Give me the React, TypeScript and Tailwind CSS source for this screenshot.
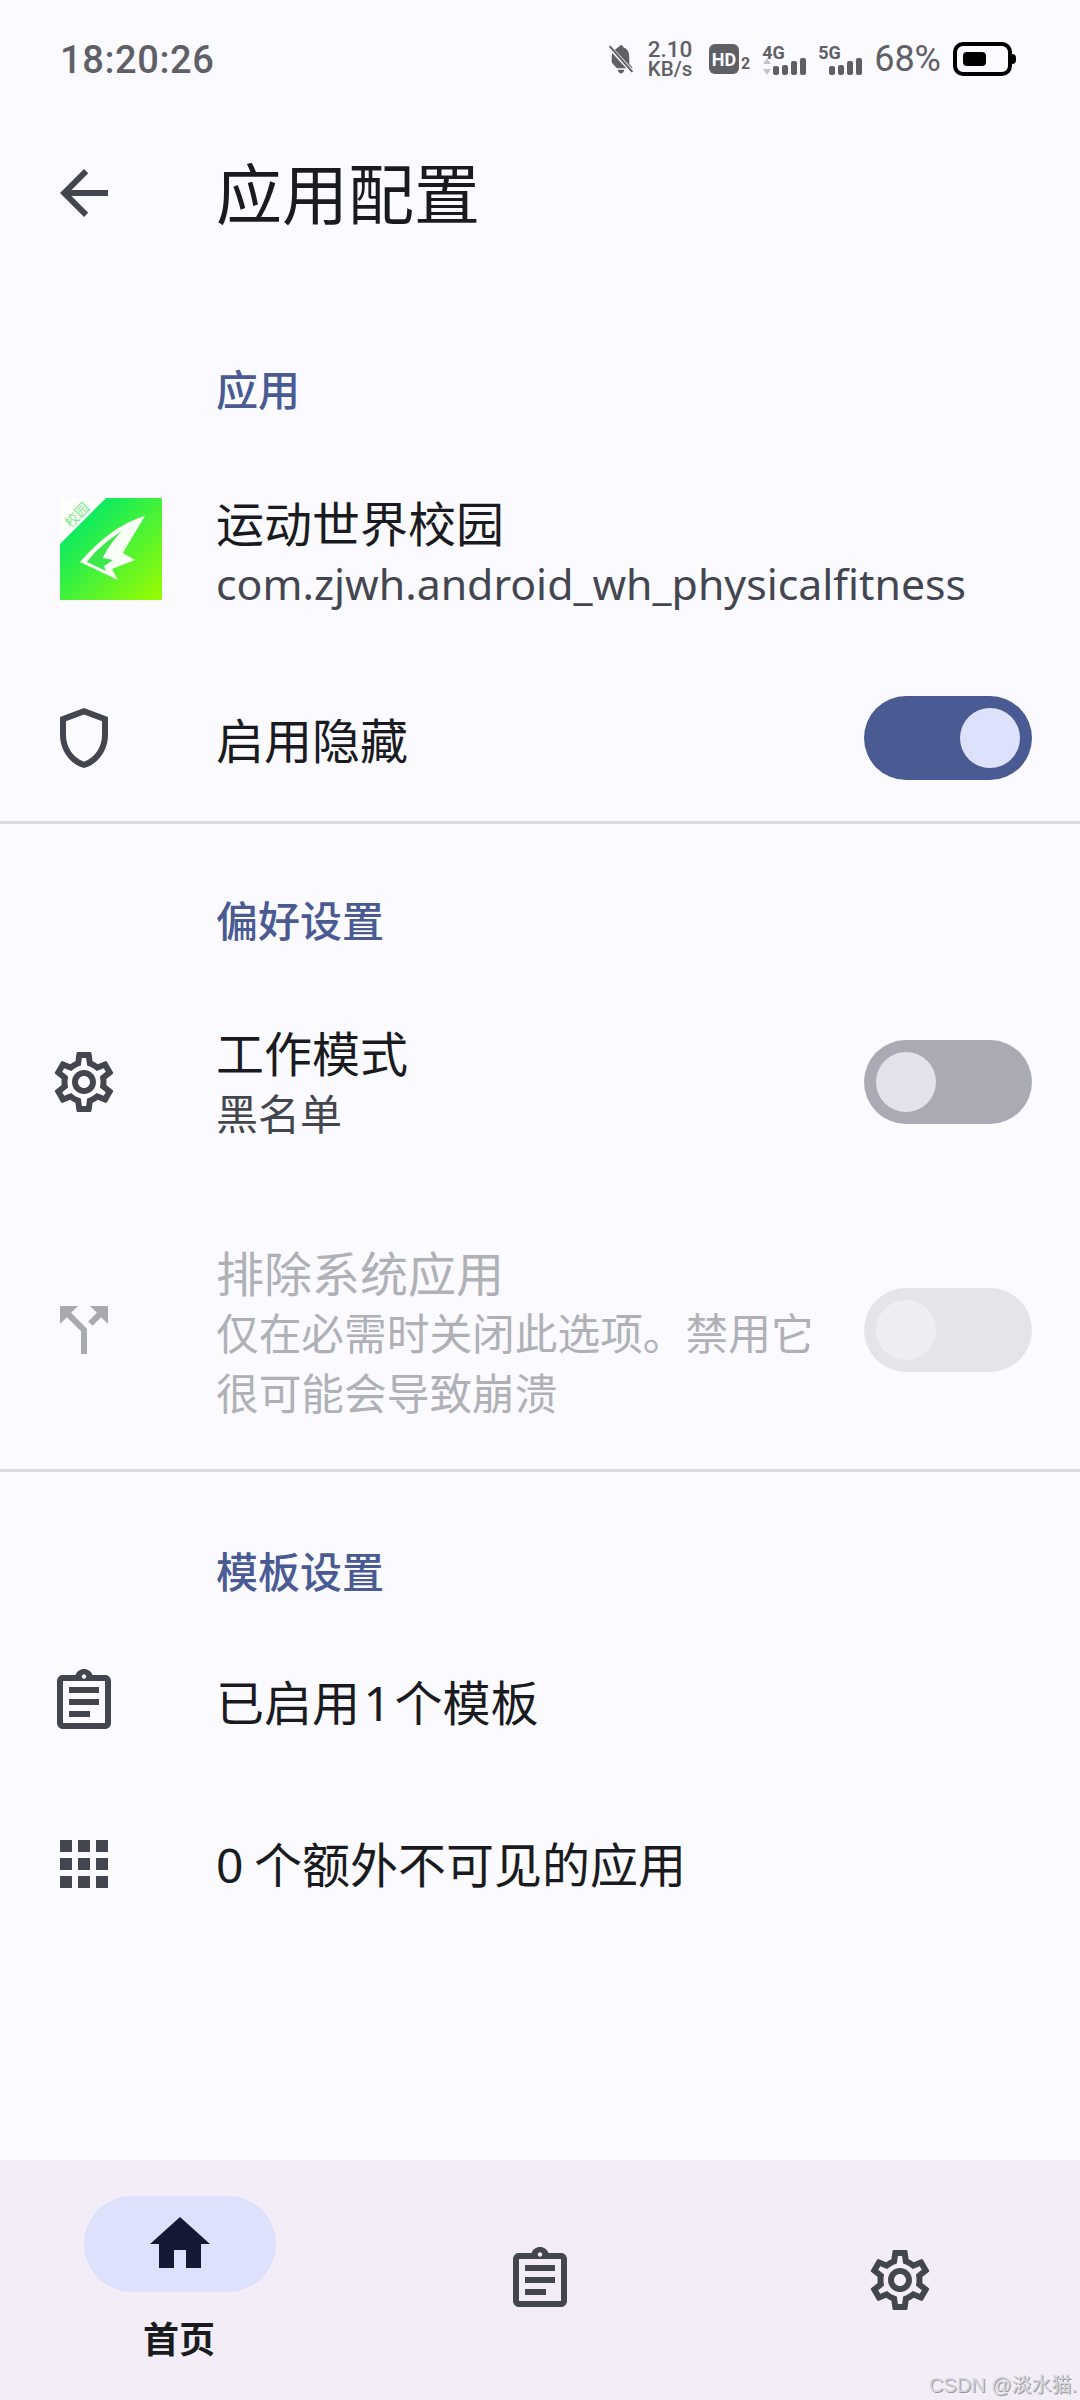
const CJK = "font-['Noto_Sans','Noto_Sans_CJK_SC',sans-serif]";

const ICONS = {
  back: 'M20 11H7.83l5.59-5.59L12 4l-8 8 8 8 1.41-1.41L7.83 13H20v-2z',
  shield:
    'M12 2 4 5v6.09c0 5.05 3.41 9.76 8 10.91 4.59-1.15 8-5.86 8-10.91V5l-8-3zm6 9.09c0 4-2.55 7.7-6 8.83-3.45-1.13-6-4.82-6-8.83v-4.7l6-2.25 6 2.25v4.7z',
  gear: 'M19.43 12.98c.04-.32.07-.64.07-.98 0-.34-.03-.66-.07-.98l2.11-1.65c.19-.15.24-.42.12-.64l-2-3.46c-.09-.16-.26-.25-.44-.25-.06 0-.12.01-.17.03l-2.49 1c-.52-.4-1.08-.73-1.69-.98l-.38-2.65C14.46 2.18 14.25 2 14 2h-4c-.25 0-.46.18-.49.42l-.38 2.65c-.61.25-1.17.59-1.69.98l-2.49-1c-.06-.02-.12-.03-.18-.03-.17 0-.34.09-.43.25l-2 3.46c-.13.22-.07.49.12.64l2.11 1.65c-.04.32-.07.65-.07.98 0 .33.03.66.07.98l-2.11 1.65c-.19.15-.24.42-.12.64l2 3.46c.09.16.26.25.44.25.06 0 .12-.01.17-.03l2.49-1c.52.4 1.08.73 1.69.98l.38 2.65c.03.24.24.42.49.42h4c.25 0 .46-.18.49-.42l.38-2.65c.61-.25 1.17-.59 1.69-.98l2.49 1c.06.02.12.03.18.03.17 0 .34-.09.43-.25l2-3.46c.12-.22.07-.49-.12-.64l-2.11-1.65zm-1.98-1.71c.04.31.05.52.05.73 0 .21-.02.43-.05.73l-.14 1.13.89.7 1.08.84-.7 1.21-1.27-.51-1.04-.42-.9.68c-.43.32-.84.56-1.25.73l-1.06.43-.16 1.13-.2 1.35h-1.4l-.19-1.35-.16-1.13-1.06-.43c-.43-.18-.83-.41-1.23-.71l-.91-.7-1.06.43-1.27.51-.7-1.21 1.08-.84.89-.7-.14-1.13c-.03-.31-.05-.54-.05-.74s.02-.43.05-.73l.14-1.13-.89-.7-1.08-.84.7-1.21 1.27.51 1.04.42.9-.68c.43-.32.84-.56 1.25-.73l1.06-.43.16-1.13.2-1.35h1.39l.19 1.35.16 1.13 1.06.43c.43.18.83.41 1.23.71l.91.7 1.06-.43 1.27-.51.7 1.21-1.07.85-.89.7.14 1.13zM12 8c-2.21 0-4 1.79-4 4s1.79 4 4 4 4-1.79 4-4-1.79-4-4-4zm0 6c-1.1 0-2-.9-2-2s.9-2 2-2 2 .9 2 2-.9 2-2 2z',
  split: 'M14 4l2.29 2.29-2.88 2.88 1.42 1.42 2.88-2.88L20 10V4zm-4 0H4v6l2.29-2.29 4.71 4.7V20h2v-8.41l-5.29-5.3z',
  clipboard:
    'M7 15h7v2H7zm0-4h10v2H7zm0-4h10v2H7zm12-4h-4.18C14.4 1.84 13.3 1 12 1c-1.3 0-2.4.84-2.82 2H5c-.14 0-.27.01-.4.04-.39.08-.74.28-1.01.55-.18.18-.33.4-.43.64-.1.23-.16.49-.16.77v14c0 .27.06.54.16.78s.25.45.43.64c.27.27.62.47 1.01.55.13.02.26.03.4.03h14c1.1 0 2-.9 2-2V5c0-1.1-.9-2-2-2zm-7-.25c.41 0 .75.34.75.75s-.34.75-.75.75-.75-.34-.75-.75.34-.75.75-.75zM19 19H5V5h14v14z',
  apps: 'M4 8h4V4H4v4zm6 12h4v-4h-4v4zm-6 0h4v-4H4v4zm0-6h4v-4H4v4zm6 0h4v-4h-4v4zm6-10v4h4V4h-4zm-6 4h4V4h-4v4zm6 6h4v-4h-4v4zm0 6h4v-4h-4v4z',
  home: 'M10 20v-6h4v6h5v-8h3L12 3 2 12h3v8z',
};

function Icon({ d, className = '' }: { d: string; className?: string }) {
  return (
    <svg viewBox="0 0 24 24" className={`h-[72px] w-[72px] shrink-0 fill-current ${className}`}>
      <path d={d} />
    </svg>
  );
}

function Toggle({ on, disabled }: { on?: boolean; disabled?: boolean }) {
  const track = on ? 'bg-[#4a5b93] justify-end' : disabled ? 'bg-[#e4e4e9]' : 'bg-[#a9aab4]';
  const thumb = on ? 'bg-[#dde1fb]' : disabled ? 'bg-[#eeeef2]' : 'bg-[#e2e2ea]';
  return (
    <div className={`flex h-[84px] w-[168px] shrink-0 items-center rounded-full px-[12px] ${track}`}>
      <div className={`h-[60px] w-[60px] rounded-full ${thumb}`} />
    </div>
  );
}

function SectionTitle({ children, className = '' }: { children: string; className?: string }) {
  return (
    <div className={`flex items-center pl-[216px] text-[42px] leading-[56px] font-medium text-[#4a5b93] ${className}`}>
      {children}
    </div>
  );
}

function AppIcon() {
  return (
    <div className="relative h-[102px] w-[102px] shrink-0">
      <svg viewBox="0 0 102 102" className="h-full w-full">
        <defs>
          <linearGradient id="appgrad" x1="0" y1="0" x2="1" y2="1">
            <stop offset="0.15" stopColor="#00ea68" />
            <stop offset="0.95" stopColor="#93fb04" />
          </linearGradient>
        </defs>
        <path d="M0 46L46 0H0z" fill="#fdfffd" />
        <path d="M46 0H102V102H0V46z" fill="url(#appgrad)" />
        <path d="M85 18C58 26 38 44 20 64L58 82L52 71L75 62L63 55C70 42 78 30 85 18z" fill="#f8fff4" />
        <path d="M27 64C36 52 48 42 62 33C55 40 47 50 43 60L53 62L44 68L46 73z" fill="#3ce84c" />
      </svg>
      <span className="absolute top-[10px] left-[3px] -rotate-45 text-[14px] leading-none text-[#7fe88a]">校园</span>
    </div>
  );
}

function SignalBars({ arrows }: { arrows?: boolean }) {
  return (
    <div className="absolute right-0 bottom-[2px] flex items-end gap-[3px]">
      {arrows && (
        <svg viewBox="0 0 8 17" className="mr-[-1px] h-[17px] w-[8px] fill-[#c4c4c8]">
          <path d="M4 0l4 6H0zM0 11h8l-4 6z" />
        </svg>
      )}
      <div className="h-[9px] w-[6px] rounded-[2px] bg-[#5f6066]" />
      <div className="h-[10px] w-[6px] rounded-[2px] bg-[#5f6066]" />
      <div className="h-[14px] w-[6px] rounded-[2px] bg-[#5f6066]" />
      <div className="h-[17px] w-[6px] rounded-[2px] bg-[#5f6066]" />
    </div>
  );
}

function StatusBar() {
  return (
    <div className="flex h-[118px] items-center justify-between pr-[64px] pl-[60px] text-[#5f6066] font-['Roboto',sans-serif]">
      <span className="mt-[2px] text-[38px] font-medium tracking-[0.6px]">18:20:26</span>
      <div className="flex items-center">
        <svg viewBox="0 0 26 30" className="h-[31px] w-[30px] fill-[#5f6066]">
          <path d="M13 1c1.400 0 2.200 1 2.400 2.300C19.400 4.500 21 8 21 12v7l3 3.500v1H9L4 18V12c0-1.700.4-3.300 1-4.700L13 1zM10 25h6c0 2-1.300 3.500-3 3.500S10 27 10 25z" />
          <path d="M2 3l22 24" stroke="#fafaff" strokeWidth="4" />
          <path d="M2 2l22 25" stroke="#5f6066" strokeWidth="2" />
        </svg>
        <div className="ml-[11px] flex w-[46px] flex-col items-center text-[22.5px] leading-[20px] font-medium">
          <span>2.10</span>
          <span className="text-[20.5px]">KB/s</span>
        </div>
        <div className="ml-[16px] flex h-[30px] w-[30px] items-center justify-center rounded-[6px] bg-[#5f6066] text-[18px] font-bold text-[#fafaff]">
          HD
        </div>
        <span className="mt-[10px] ml-[2px] text-[16px] leading-none font-bold">2</span>
        <div className="relative ml-[12px] h-[36px] w-[44px]">
          <span className="absolute top-[3px] left-0 text-[18px] leading-none font-bold">4G</span>
          <SignalBars arrows />
        </div>
        <div className="relative ml-[12px] h-[36px] w-[44px]">
          <span className="absolute top-[3px] left-0 text-[18px] leading-none font-bold">5G</span>
          <SignalBars />
        </div>
        <span className="ml-[12px] text-[36px] leading-none">68%</span>
        <div className="ml-[12px] flex h-[34px] w-[59px] items-center rounded-[10px] border-[4px] border-black px-[6px]">
          <div className="h-[14px] w-[23px] rounded-[4px] bg-black" />
        </div>
        <div className="h-[10px] w-[4px] rounded-r-full bg-black" />
      </div>
    </div>
  );
}

export default function App() {
  return (
    <div className={`flex h-[2400px] w-[1080px] flex-col overflow-hidden bg-[#fafaff] ${CJK}`}>
      <StatusBar />

      <div className="flex h-[150px] items-center pl-[48px]">
        <Icon d={ICONS.back} className="text-[#44464f]" />
        <h1 className="ml-[96px] text-[66px] leading-none font-normal text-[#1a1b20]">应用配置</h1>
      </div>

      <SectionTitle className="mt-[62px] mb-[3px] h-[119px]">应用</SectionTitle>

      <div className="flex h-[194px] items-center pl-[60px]">
        <AppIcon />
        <div className="mt-[10px] ml-[54px] flex flex-col">
          <span className="text-[48px] leading-[60px] text-[#1a1b20]">运动世界校园</span>
          <span className="text-[42.8px] leading-[60px] text-[#44464f]">com.zjwh.android_wh_physicalfitness</span>
        </div>
      </div>

      <div className="mt-[9px] flex h-[166px] items-center px-[48px]">
        <Icon d={ICONS.shield} className="text-[#44464f]" />
        <span className="mt-[6px] ml-[96px] flex-1 text-[48px] leading-[60px] text-[#1a1b20]">启用隐藏</span>
        <Toggle on />
      </div>

      <div className="h-[3px] bg-[#dcdce0]" />

      <SectionTitle className="h-[194px]">偏好设置</SectionTitle>

      <div className="flex h-[128px] items-center px-[48px]">
        <Icon d={ICONS.gear} className="text-[#44464f]" />
        <div className="mt-[3px] ml-[96px] flex flex-1 flex-col">
          <span className="text-[48px] leading-[60px] text-[#1a1b20]">工作模式</span>
          <span className="text-[42px] leading-[60px] text-[#44464f]">黑名单</span>
        </div>
        <Toggle />
      </div>

      <div className="mt-[94px] flex h-[180px] items-center px-[48px]">
        <Icon d={ICONS.split} className="text-[#a9aab0]" />
        <div className="mt-[7px] ml-[96px] flex flex-1 flex-col">
          <span className="text-[48px] leading-[60px] text-[#b0b1b7]">排除系统应用</span>
          <span className="w-[610px] text-[42.7px] leading-[60px] text-[#b0b1b7]">仅在必需时关闭此选项。禁用它很可能会导致崩溃</span>
        </div>
        <Toggle disabled />
      </div>

      <div className="mt-[49px] h-[3px] bg-[#dcdce0]" />

      <SectionTitle className="mt-[72px] mb-[18px] h-[56px]">模板设置</SectionTitle>

      <div className="flex h-[167px] items-center pl-[48px]">
        <Icon d={ICONS.clipboard} className="text-[#44464f]" />
        <span className="mt-[3px] ml-[96px] text-[48px] leading-[60px] text-[#1a1b20]">
          已启用<span className="mx-[3.5px]">1</span>个模板
        </span>
      </div>

      <div className="flex h-[158px] items-center pl-[48px]">
        <Icon d={ICONS.apps} className="text-[#44464f]" />
        <span className="mt-[2px] ml-[96px] text-[48px] leading-[60px] text-[#1a1b20] [word-spacing:-2px]">0 个额外不可见的应用</span>
      </div>

      <div className="relative mt-auto grid h-[240px] grid-cols-3 bg-[#f3edf7]">
        <div className="flex flex-col items-center pt-[36px]">
          <div className="flex h-[96px] w-[192px] items-center justify-center rounded-full bg-[#dde1fb]">
            <Icon d={ICONS.home} className="text-[#141a33]" />
          </div>
          <span className="mt-[24px] -ml-[2px] text-[36px] leading-[48px] font-bold text-[#1a1b20]">首页</span>
        </div>
        <div className="flex justify-center pt-[84px]">
          <Icon d={ICONS.clipboard} className="text-[#44464f]" />
        </div>
        <div className="flex justify-center pt-[84px]">
          <Icon d={ICONS.gear} className="text-[#44464f]" />
        </div>
        <span className="absolute right-[3px] bottom-[1px] font-['Liberation_Sans','Noto_Sans_CJK_SC',sans-serif] text-[20px] leading-[28px] text-[#d4d3d7] [text-shadow:1px_1px_0_#9a9a9e]">
          CSDN @淡水猫.
        </span>
      </div>
    </div>
  );
}
